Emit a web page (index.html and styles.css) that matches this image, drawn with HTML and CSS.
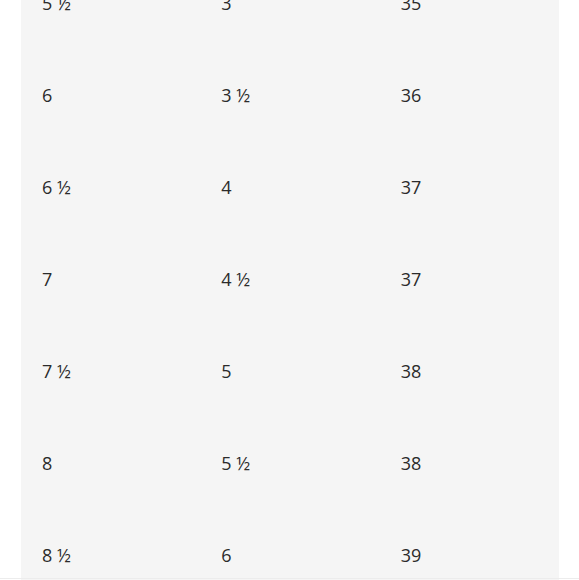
FILE: index.html
```html
<!DOCTYPE html>
<html>
<head>
<meta charset="utf-8">
<link rel="stylesheet" href="styles.css">
</head>
<body>
<div class="panel">
  <table class="sizes">
    <tbody>
      <tr><td>5 ½</td><td>3</td><td>35</td></tr>
      <tr><td>6</td><td>3 ½</td><td>36</td></tr>
      <tr><td>6 ½</td><td>4</td><td>37</td></tr>
      <tr><td>7</td><td>4 ½</td><td>37</td></tr>
      <tr><td>7 ½</td><td>5</td><td>38</td></tr>
      <tr><td>8</td><td>5 ½</td><td>38</td></tr>
      <tr><td>8 ½</td><td>6</td><td>39</td></tr>
    </tbody>
  </table>
</div>
<div class="edge"></div>
</body>
</html>
```
FILE: styles.css
```css
html, body {
  margin: 0;
  padding: 0;
  background: #ffffff;
  overflow: hidden;
}
body {
  font-family: "Open Sans", Lato, sans-serif;
  color: #2b2b2b;
}
.panel {
  margin: 0 20px 0 21px;
  background: #f5f5f5;
  height: 620px;
  overflow: hidden;
}
.sizes {
  width: 100%;
  table-layout: fixed;
  border-collapse: collapse;
  margin-top: -43px;
}
.sizes td {
  height: 92px;
  padding: 0 0 0 21px;
  font-size: 18px;
  vertical-align: middle;
}
.edge {
  position: fixed;
  left: 0;
  right: 0;
  bottom: 1px;
  height: 1px;
  background: #ececec;
}
```
